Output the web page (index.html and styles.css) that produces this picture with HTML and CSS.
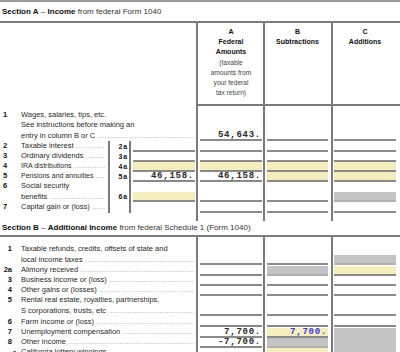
FILE: index.html
```html
<!DOCTYPE html>
<html>
<head>
<meta charset="utf-8">
<link rel="stylesheet" href="styles.css">
</head>
<body>
<div class="page">
  <div class="top-rule"></div>
  <div class="sec-title"><b>Section A</b> – <b>Income</b> from federal Form 1040</div>
  <div class="sec-rule"></div>

  <div class="row hdr">
    <div class="lab"></div>
    <div class="col ch"><b>A</b><b>Federal</b><b>Amounts</b><span>(taxable</span><span>amounts from</span><span>your federal</span><span>tax return)</span></div>
    <div class="col ch"><b>B</b><b>Subtractions</b></div>
    <div class="col ch"><b>C</b><b>Additions</b></div>
  </div>

  <div class="row h35">
    <div class="lab"><div class="main"><span class="num">1</span><div class="txt"><div class="ln">Wages, salaries, tips, etc.</div><div class="ln">See instructions before making an</div><div class="ln"><span>entry in column B or C</span><span class="dots"></span></div></div></div></div>
    <div class="col"><div class="f">54,643.</div></div>
    <div class="col"><div class="f"></div></div>
    <div class="col"><div class="f"></div></div>
  </div>

  <div class="row">
    <div class="lab"><div class="main w"><span class="num">2</span><div class="txt"><div class="ln"><span>Taxable interest</span><span class="dots"></span></div></div></div><div class="sub">2a</div><div class="sf"><div class="f"></div></div></div>
    <div class="col"><div class="f"></div></div>
    <div class="col"><div class="f"></div></div>
    <div class="col"><div class="f"></div></div>
  </div>

  <div class="row">
    <div class="lab"><div class="main w"><span class="num">3</span><div class="txt"><div class="ln"><span>Ordinary dividends</span><span class="dots"></span></div></div></div><div class="sub">3a</div><div class="sf"><div class="f"></div></div></div>
    <div class="col"><div class="f"></div></div>
    <div class="col"><div class="f"></div></div>
    <div class="col"><div class="f"></div></div>
  </div>

  <div class="row">
    <div class="lab"><div class="main w"><span class="num">4</span><div class="txt"><div class="ln sm"><span>IRA distributions</span><span class="dots"></span></div></div></div><div class="sub">4a</div><div class="sf"><div class="f y"></div></div></div>
    <div class="col"><div class="f y"></div></div>
    <div class="col"><div class="f y"></div></div>
    <div class="col"><div class="f y"></div></div>
  </div>

  <div class="row">
    <div class="lab"><div class="main w"><span class="num">5</span><div class="txt"><div class="ln sm"><span>Pensions and annuities</span><span class="dots"></span></div></div></div><div class="sub">5a</div><div class="sf"><div class="f">46,158.</div></div></div>
    <div class="col"><div class="f">46,158.</div></div>
    <div class="col"><div class="f y"></div></div>
    <div class="col"><div class="f y"></div></div>
  </div>

  <div class="row h21">
    <div class="lab"><div class="main w"><span class="num">6</span><div class="txt"><div class="ln">Social security</div><div class="ln"><span>benefits</span><span class="dots"></span></div></div></div><div class="sub">6a</div><div class="sf"><div class="f y"></div></div></div>
    <div class="col"><div class="f"></div></div>
    <div class="col"><div class="f"></div></div>
    <div class="col"><div class="f g"></div></div>
  </div>

  <div class="row">
    <div class="lab"><div class="main w"><span class="num">7</span><div class="txt"><div class="ln"><span>Capital gain or (loss)</span><span class="dots"></span></div></div></div><div class="sub"></div><div class="sf"></div></div>
    <div class="col"><div class="f"></div></div>
    <div class="col"><div class="f"></div></div>
    <div class="col"><div class="f"></div></div>
  </div>

  <div class="row h9">
    <div class="lab"></div>
    <div class="col"></div>
    <div class="col"></div>
    <div class="col"></div>
  </div>

  <div class="sec-title b"><b>Section B</b> – <b>Additional Income</b> from federal Schedule 1 (Form 1040)</div>
  <div class="sec-rule"></div>

  <div class="secb">
    <div class="row h28">
      <div class="lab"><div class="main"><span class="num">1</span><div class="txt"><div class="ln">Taxable refunds, credits, offsets of state and</div><div class="ln"><span>local income taxes</span><span class="dots"></span></div></div></div></div>
      <div class="col"><div class="f"></div></div>
      <div class="col"><div class="f"></div></div>
      <div class="col"><div class="f g"></div></div>
    </div>

    <div class="row">
      <div class="lab"><div class="main"><span class="num">2a</span><div class="txt"><div class="ln"><span>Alimony received</span><span class="dots"></span></div></div></div></div>
      <div class="col"><div class="f"></div></div>
      <div class="col"><div class="f g"></div></div>
      <div class="col"><div class="f y"></div></div>
    </div>

    <div class="row">
      <div class="lab"><div class="main"><span class="num">3</span><div class="txt"><div class="ln"><span>Business income or (loss)</span><span class="dots"></span></div></div></div></div>
      <div class="col"><div class="f"></div></div>
      <div class="col"><div class="f"></div></div>
      <div class="col"><div class="f"></div></div>
    </div>

    <div class="row">
      <div class="lab"><div class="main"><span class="num">4</span><div class="txt"><div class="ln"><span>Other gains or (losses)</span><span class="dots"></span></div></div></div></div>
      <div class="col"><div class="f"></div></div>
      <div class="col"><div class="f"></div></div>
      <div class="col"><div class="f"></div></div>
    </div>

    <div class="row h21">
      <div class="lab"><div class="main"><span class="num">5</span><div class="txt"><div class="ln">Rental real estate, royalties, partnerships,</div><div class="ln"><span>S corporations, trusts, etc</span><span class="dots"></span></div></div></div></div>
      <div class="col"><div class="f"></div></div>
      <div class="col"><div class="f"></div></div>
      <div class="col"><div class="f"></div></div>
    </div>

    <div class="row h11">
      <div class="lab"><div class="main"><span class="num">6</span><div class="txt"><div class="ln"><span>Farm income or (loss)</span><span class="dots"></span></div></div></div></div>
      <div class="col"><div class="f"></div></div>
      <div class="col"><div class="f"></div></div>
      <div class="col"><div class="f"></div></div>
    </div>

    <div class="row">
      <div class="lab"><div class="main"><span class="num">7</span><div class="txt"><div class="ln"><span>Unemployment compensation</span><span class="dots"></span></div></div></div></div>
      <div class="col"><div class="f">7,700.</div></div>
      <div class="col"><div class="f y blue">7,700.</div></div>
      <div class="col"><div class="f gs"></div></div>
    </div>

    <div class="row">
      <div class="lab"><div class="main"><span class="num">8</span><div class="txt"><div class="ln"><span>Other income</span><span class="dots"></span></div></div></div></div>
      <div class="col"><div class="f">-7,700.</div></div>
      <div class="col"><div class="f g"></div></div>
      <div class="col"><div class="f gs"></div></div>
    </div>

    <div class="row">
      <div class="lab"><div class="main"><span class="num bul">•</span><div class="txt"><div class="ln"><span>California lottery winnings</span><span class="dots"></span></div></div></div></div>
      <div class="col"><div class="f"></div></div>
      <div class="col"><div class="f y"></div></div>
      <div class="col"><div class="f gs"></div></div>
    </div>
  </div>
</div>
</body>
</html>
```

FILE: styles.css
```css
* { box-sizing: border-box; margin: 0; padding: 0; }
html, body { background: #fff; }
body {
  margin: 0;
  width: 400px;
  height: 352px;
  overflow: hidden;
  font-family: "Liberation Sans", Arial, sans-serif;
  color: #222;
}
.page { width: 400px; }

.top-rule { height: 2px; background: #9c9c9c; }
.sec-title {
  height: 19px;
  line-height: 19px;
  font-size: 8px;
  padding-left: 2px;
  color: #333;
  white-space: nowrap;
}
.sec-title b { color: #111; }
.sec-title.b { height: 14px; line-height: 14px; }
.sec-rule { height: 2px; background: #7c7c7c; }

.row {
  display: grid;
  grid-template-columns: 196px 67px 68px 69px;
  height: 10px;
}
.row.h35 { height: 35px; }
.row.h28 { height: 28px; }
.row.h21 { height: 21px; }
.row.h11 { height: 11px; }
.row.h9 { height: 9px; }

.col {
  border-left: 2px solid #7a7a7a;
  display: flex;
  flex-direction: column;
  justify-content: flex-end;
}
.row > .col:nth-child(2) { padding: 0 1px 0 2px; }
.row > .col:nth-child(3) { padding: 0 3px 0 2px; }
.row > .col:nth-child(4) { padding: 0 4px 0 1px; }

.hdr { height: 83px; }
.row.hdr > .col {
  border-bottom: 2px solid #7a7a7a;
  justify-content: flex-start;
  align-items: center;
  padding-top: 4px;
  font-size: 7px;
  line-height: 10.2px;
  text-align: center;
}
.ch b { display: block; color: #111; }
.ch span { display: block; color: #444; font-size: 6.6px; }

.lab {
  display: flex;
  align-items: stretch;
  font-size: 7.5px;
  line-height: 10.5px;
  color: #2a2a2a;
}
.main {
  display: flex;
  align-items: flex-end;
  flex: 1;
  min-width: 0;
}
.main.w { flex: 0 0 108px; }
.num {
  flex: 0 0 21px;
  padding-left: 3px;
  font-weight: bold;
  color: #111;
}
.row.h21 .num, .row.h28 .num { margin-bottom: 10.5px; }
.row.h35 .num { margin-bottom: 21px; }

.txt { flex: 1; min-width: 0; padding-right: 2px; }
.main.w .txt { padding-right: 3px; }
.ln {
  display: flex;
  white-space: nowrap;
  overflow: hidden;
}
.ln.sm { font-size: 7px; }
.dots {
  flex: 1;
  min-width: 0;
  overflow: hidden;
  color: #9a9a9a;
  margin-left: 2px;
}
.dots::after {
  content: "..............................................................................................";
  letter-spacing: 0.35px;
}

.sub {
  flex: 0 0 23px;
  border-left: 2px solid #7a7a7a;
  border-right: 2px solid #7a7a7a;
  display: flex;
  align-items: flex-end;
  justify-content: flex-end;
  padding-right: 1px;
  font-weight: bold;
  font-size: 7px;
  line-height: 10px;
  letter-spacing: 0.8px;
  color: #111;
}
.sf {
  flex: 0 0 62px;
  margin-left: 2px;
  display: flex;
  flex-direction: column;
  justify-content: flex-end;
}

.f {
  height: 10px;
  border-bottom: 2px solid #8a8a8a;
  font-family: "Liberation Mono", "Courier New", monospace;
  font-weight: bold;
  font-size: 9px;
  line-height: 9px;
  letter-spacing: 0.75px;
  text-align: right;
  color: #2a2a2a;
  padding-right: 1px;
  white-space: nowrap;
  overflow: hidden;
}
.f.y { background: #f4eebd; }
.f.g { background: #c4c4c4; border-bottom-color: #b0b0b0; }
.f.gs { background: #c4c4c4; border-bottom-color: #c4c4c4; }
.f.blue { color: #3838e6; }

.secb .num {
  text-align: right;
  padding-left: 0;
  padding-right: 9px;
}
.secb .num.bul { padding-right: 5px; font-weight: normal; }
```
